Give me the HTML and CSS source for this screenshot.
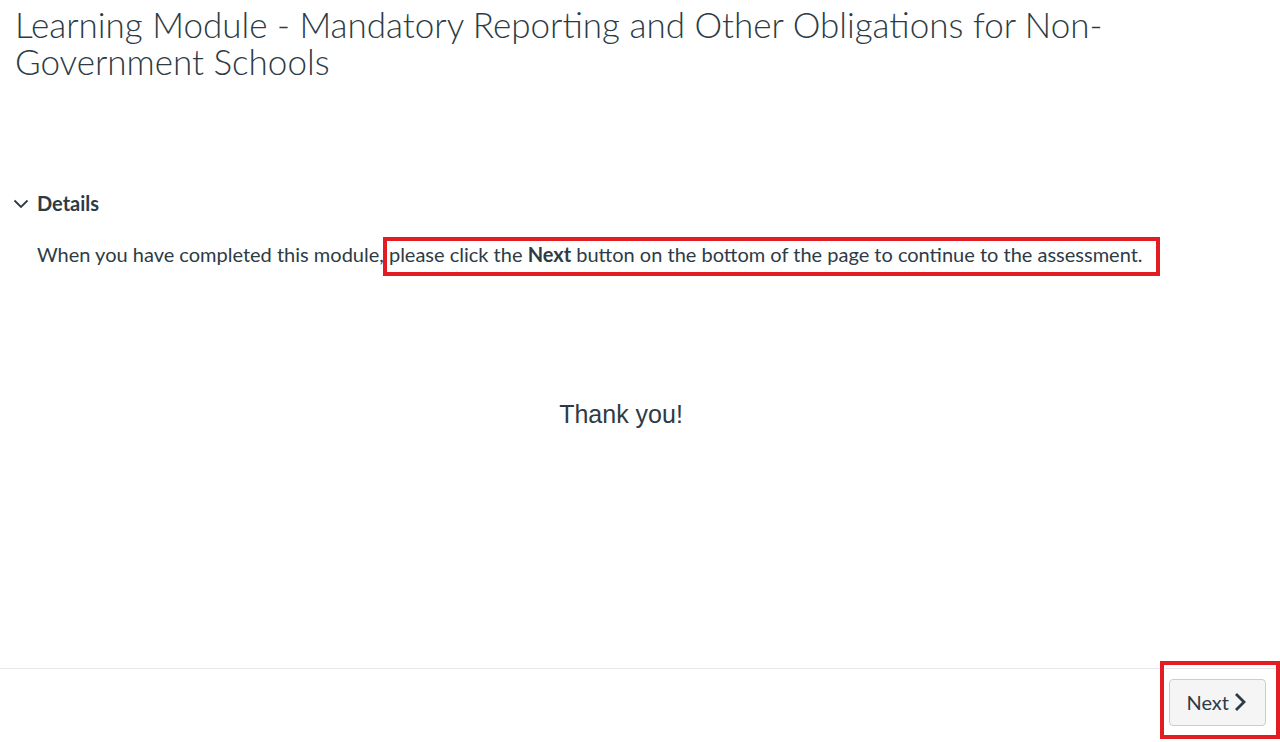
FILE: index.html
```html
<!DOCTYPE html>
<html lang="en">
<head>
<meta charset="utf-8">
<title>Learning Module</title>
<link rel="stylesheet" href="styles.css">
</head>
<body>
<div class="page">
  <main class="content">
    <h1 class="title">Learning Module - Mandatory Reporting and Other Obligations for Non-Government Schools</h1>
    <section class="details">
      <div class="details-head">
        <svg class="chev-down" width="16" height="10" viewBox="0 0 16 10" aria-hidden="true"><path d="M1.5 1.5 L8 8 L14.5 1.5" fill="none" stroke="#2d3b45" stroke-width="1.8"/></svg>
        <span class="details-label">Details</span>
      </div>
      <p class="details-text">When you have completed this module, <span class="hl">please click the <strong>Next</strong> button on the bottom of the page to continue to the assessment.</span></p>
    </section>
    <p class="thanks">Thank you!</p>
  </main>
  <footer class="footer">
    <button class="next-btn" type="button">Next<svg class="chev-right" width="12" height="20" viewBox="0 0 12 20" aria-hidden="true"><path d="M2 2 L10 10 L2 18" fill="none" stroke="#2d3b45" stroke-width="2.8"/></svg></button>
    <div class="annot-btn"></div>
  </footer>
</div>
</body>
</html>
```

FILE: styles.css
```css
html, body {
  margin: 0;
  padding: 0;
  background: #ffffff;
}
body {
  font-family: Lato, "Liberation Sans", sans-serif;
  color: #2d3b45;
}
.page {
  display: flex;
  flex-direction: column;
  height: 742px;
  overflow: hidden;
}
.content {
  flex: 1;
}
.title {
  margin: 6px 0 0 15px;
  font-weight: 300;
  font-size: 35px;
  line-height: 37px;
  color: #2d3b45;
}
.details {
  margin-top: 111px;
}
.details-head {
  display: flex;
  align-items: center;
  height: 24px;
  padding-left: 13px;
  gap: 8px;
}
.chev-down {
  display: block;
  margin-top: 2px;
}
.details-label {
  font-weight: 700;
  font-size: 20px;
  line-height: 24px;
}
.details-text {
  margin: 27px 0 0 37px;
  font-size: 20px;
  line-height: 24px;
}
.details-text strong {
  font-weight: 700;
}
.hl {
  position: relative;
}
.hl::before {
  content: "";
  position: absolute;
  left: -6px;
  right: -17px;
  top: -5px;
  bottom: -10px;
  border: 4px solid #e31b23;
  pointer-events: none;
}
.thanks {
  margin: 134px 0 0 0;
  padding-right: 38px;
  text-align: center;
  font-family: "Liberation Sans", Arial, sans-serif;
  font-size: 25px;
  line-height: 28px;
  color: #2d3b45;
}
.footer {
  position: relative;
  height: 74px;
  border-top: 1px solid #e5e7e8;
  display: flex;
  justify-content: flex-end;
  align-items: flex-start;
  padding: 10px 14px 0 0;
  box-sizing: border-box;
}
.next-btn {
  display: flex;
  align-items: center;
  gap: 5px;
  height: 47px;
  padding: 0 19px 2px 16px;
  background: #f5f5f5;
  border: 1px solid #c7cdd1;
  border-radius: 4px;
  font-family: Lato, "Liberation Sans", sans-serif;
  font-size: 20px;
  color: #2d3b45;
  cursor: pointer;
}
.chev-right {
  display: block;
}
.annot-btn {
  position: absolute;
  left: 1160px;
  top: -8px;
  width: 120px;
  height: 78px;
  box-sizing: border-box;
  border: 4px solid #e31b23;
  pointer-events: none;
}
```
